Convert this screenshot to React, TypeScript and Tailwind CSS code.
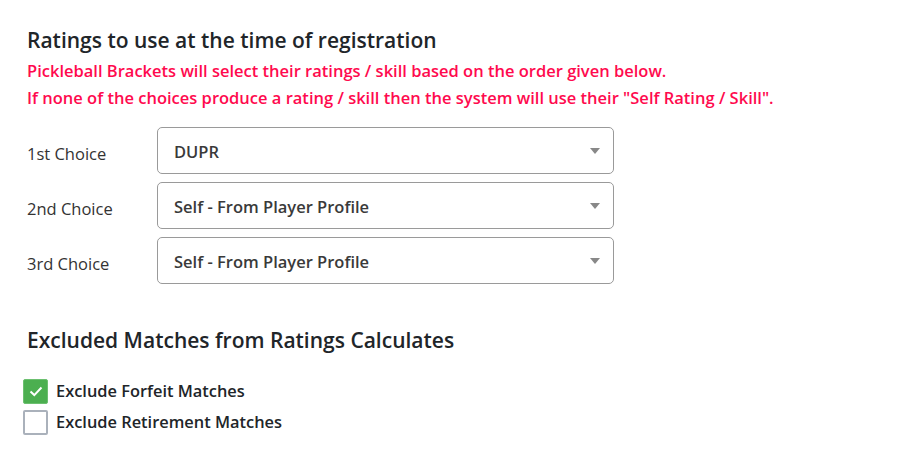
import { useState } from "react";

const CHOICES = [
  { label: "1st Choice", value: "DUPR" },
  { label: "2nd Choice", value: "Self - From Player Profile" },
  { label: "3rd Choice", value: "Self - From Player Profile" },
];

function Caret() {
  return (
    <svg width="10" height="6" viewBox="0 0 10 6" className="absolute right-[13px] top-1/2 -translate-y-1/2">
      <path d="M0 0h10L5 6z" fill="#888" />
    </svg>
  );
}

function Check({ checked, label, onToggle }: { checked: boolean; label: string; onToggle: () => void }) {
  return (
    <label className="flex items-center gap-[8px] cursor-pointer" onClick={onToggle}>
      {checked ? (
        <span className="flex h-[25px] w-[25px] items-center justify-center rounded-[2px] border border-[#6cc070] bg-[#4caf50]">
          <svg width="14" height="11" viewBox="0 0 14 11">
            <path d="M1.5 5.5l3.8 3.6L12.5 1.5" fill="none" stroke="#fff" strokeWidth="2" />
          </svg>
        </span>
      ) : (
        <span className="h-[25px] w-[25px] rounded-[2px] border-2 border-[#aab1bb] bg-white" />
      )}
      <span className="text-[16.4px] font-semibold text-[#212529]">{label}</span>
    </label>
  );
}

export default function App() {
  const [forfeit, setForfeit] = useState(true);
  const [retire, setRetire] = useState(false);

  return (
    <div className="h-[453px] w-[900px] bg-white pl-[27px] pt-[26px] font-['Open_Sans',sans-serif] text-[#212529]">
      <h2 className="text-[21px] font-semibold leading-[28px]">Ratings to use at the time of registration</h2>
      <div className="mt-[3px] text-[16.5px] font-semibold leading-[27px] text-[#ff0a4e]">
        <p>Pickleball Brackets will select their ratings / skill based on the order given below.</p>
        <p>If none of the choices produce a rating / skill then the system will use their "Self Rating / Skill".</p>
      </div>

      <div className="mt-[16px] flex flex-col gap-[8px]">
        {CHOICES.map((c) => (
          <div key={c.label} className="flex items-center">
            <span className="w-[130px] pt-[8px] text-[16.5px] text-[#333]">{c.label}</span>
            <div className="relative flex h-[47px] w-[457px] items-center rounded-[5px] border border-[#9a9a9a] pl-[16px] pt-[3px] text-[16.5px] font-semibold text-[#3a3a3a]">
              {c.value}
              <Caret />
            </div>
          </div>
        ))}
      </div>

      <h2 className="mt-[42px] text-[21px] font-semibold leading-[28px]">Excluded Matches from Ratings Calculates</h2>

      <div className="ml-[-4px] mt-[25px] flex flex-col gap-[6px]">
        <Check checked={forfeit} label="Exclude Forfeit Matches" onToggle={() => setForfeit(!forfeit)} />
        <Check checked={retire} label="Exclude Retirement Matches" onToggle={() => setRetire(!retire)} />
      </div>
    </div>
  );
}
